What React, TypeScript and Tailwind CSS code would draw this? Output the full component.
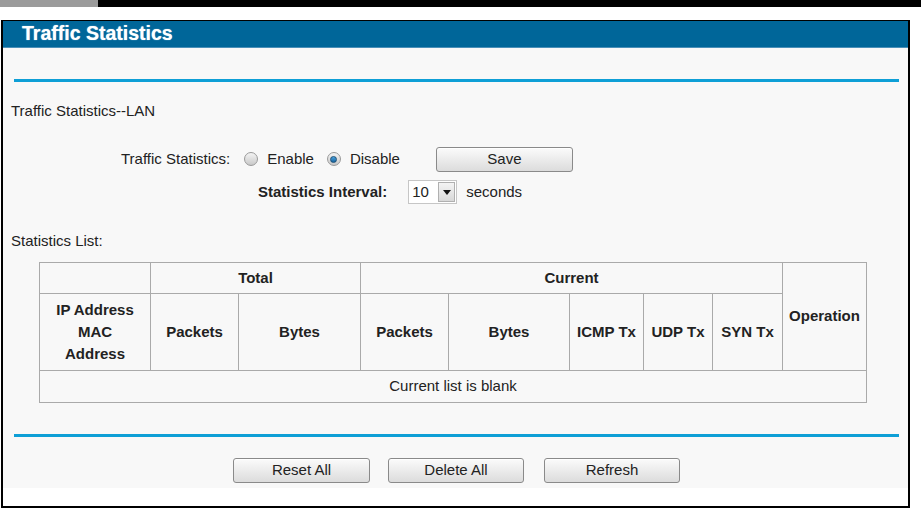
import React from "react";

const font = { fontFamily: '"Liberation Sans", Arial, sans-serif' };

function Radio({ checked }: { checked?: boolean }) {
  return (
    <span className="inline-flex h-[14px] w-[14px] items-center justify-center rounded-full border border-[#9a9a9a] bg-gradient-to-b from-[#f4f4f4] to-[#c9c9c9]">
      {checked && (
        <span className="h-[7px] w-[7px] rounded-full border border-[#1d4f75] bg-gradient-to-b from-[#4aa3e0] to-[#1565a0]" />
      )}
    </span>
  );
}

function Btn({ label, w }: { label: string; w: string }) {
  return (
    <button
      className={`${w} h-[25px] rounded-[3px] border border-[#8a8a8a] bg-gradient-to-b from-[#fbfbfb] to-[#dcdcdc] text-[15px] text-[#222] shadow-[inset_0_1px_0_#fff]`}
    >
      {label}
    </button>
  );
}

export default function App() {
  return (
    <div className="h-[508px] w-[921px] bg-white text-[#222]" style={font}>
      {/* top strip */}
      <div className="flex h-[7px]">
        <div className="w-[98px] bg-[#9b9b9b]" />
        <div className="flex-1 bg-black" />
      </div>

      <div className="ml-[1px] mt-[13px] h-[488px] w-[909px] border-2 border-t border-black bg-white">
        <div className="flex h-[27px] items-center border-b border-[#4a8fb8] bg-[#006699] pl-[19px] text-[19.5px] font-bold text-white [text-shadow:0_0_1px_#bde]">
          Traffic Statistics
        </div>

        <div className="h-[440px] bg-[#f8f8f8] px-[11px]">
          <div className="pt-[31px]">
            <div className="h-[3px] w-[885px] bg-[#0e9fd6]" />
          </div>

          <div className="mt-[20px] -ml-[3px] text-[15px] leading-[18px]">
            Traffic Statistics--LAN
          </div>

          <div className="mt-[27px] flex h-[24px] items-center text-[15px]">
            <span className="ml-[107px]">Traffic Statistics:</span>
            <span className="ml-[14px] flex">
              <Radio />
            </span>
            <span className="ml-[9px]">Enable</span>
            <span className="ml-[13px] flex">
              <Radio checked />
            </span>
            <span className="ml-[9px]">Disable</span>
            <span className="ml-[36px] flex">
              <Btn label="Save" w="w-[137px]" />
            </span>
          </div>

          <div className="mt-[9px] flex h-[24px] items-center text-[15px]">
            <span className="ml-[244px] font-bold">Statistics Interval:</span>
            <div className="ml-[21px] flex h-[24px] w-[49px] items-center border border-[#c6c6c6] bg-white">
              <span className="pl-[3px] text-[15px]">10</span>
              <span className="ml-auto mr-[1px] flex h-[20px] w-[17px] items-center justify-center border border-[#b0b0b0] bg-gradient-to-b from-[#f4f4f4] to-[#d8d8d8]">
                <svg width="8" height="5" viewBox="0 0 8 5">
                  <path d="M0 0h8L4 5z" fill="#111" />
                </svg>
              </span>
            </div>
            <span className="ml-[9px]">seconds</span>
          </div>

          <div className="mt-[28px] -ml-[3px] text-[15px] leading-[18px]">Statistics List:</div>

          <table className="ml-[25px] mt-[12px] border-collapse text-center text-[15px] font-bold">
            <tbody>
              <tr className="h-[31px]">
                <td className="w-[111px] border border-[#aaaaaa]" />
                <td colSpan={2} className="border border-[#aaaaaa]">
                  Total
                </td>
                <td colSpan={5} className="border border-[#aaaaaa]">
                  Current
                </td>
                <td rowSpan={2} className="w-[84px] border border-[#aaaaaa]">
                  Operation
                </td>
              </tr>
              <tr className="h-[77px] leading-[22px]">
                <td className="border border-[#aaaaaa]">
                  IP Address
                  <br />
                  MAC
                  <br />
                  Address
                </td>
                <td className="w-[88px] border border-[#aaaaaa]">Packets</td>
                <td className="w-[122px] border border-[#aaaaaa]">Bytes</td>
                <td className="w-[88px] border border-[#aaaaaa]">Packets</td>
                <td className="w-[121px] border border-[#aaaaaa]">Bytes</td>
                <td className="w-[74px] border border-[#aaaaaa]">ICMP Tx</td>
                <td className="w-[69px] border border-[#aaaaaa]">UDP Tx</td>
                <td className="w-[70px] border border-[#aaaaaa]">SYN Tx</td>
              </tr>
              <tr className="h-[32px]">
                <td colSpan={9} className="border border-[#aaaaaa] font-normal">
                  Current list is blank
                </td>
              </tr>
            </tbody>
          </table>

          <div className="mt-[31px] h-[3px] w-[885px] bg-[#0e9fd6]" />

          <div className="mt-[21px] flex">
            <span className="ml-[219px] flex">
              <Btn label="Reset All" w="w-[137px]" />
            </span>
            <span className="ml-[18px] flex">
              <Btn label="Delete All" w="w-[136px]" />
            </span>
            <span className="ml-[20px] flex">
              <Btn label="Refresh" w="w-[136px]" />
            </span>
          </div>
        </div>
      </div>
    </div>
  );
}
